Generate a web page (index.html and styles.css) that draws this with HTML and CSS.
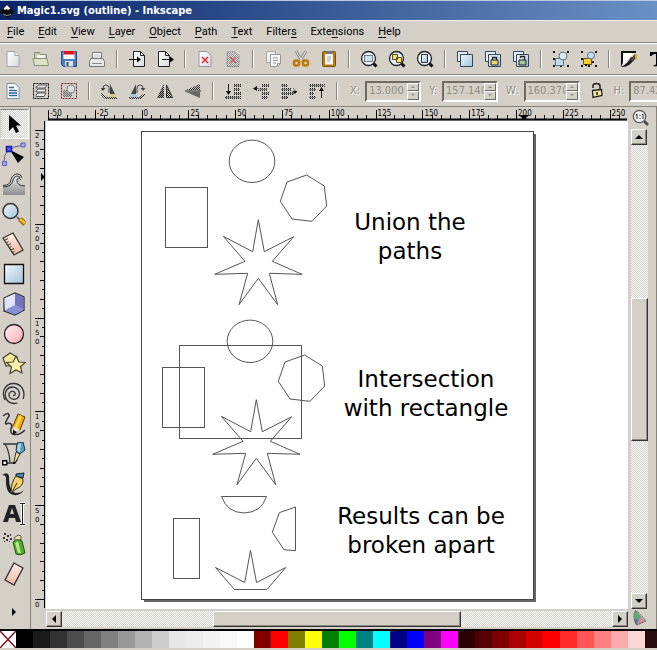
FILE: index.html
```html
<!DOCTYPE html>
<html lang="en">
<head>
<meta charset="utf-8">
<title>Magic1.svg (outline) - Inkscape</title>
<link rel="stylesheet" href="styles.css">
</head>
<body>
<svg class="defs" aria-hidden="true">
  <defs>
    <linearGradient id="gBlue" x1="0" y1="0" x2="1" y2="1"><stop offset="0" stop-color="#f4f9fd"/><stop offset="1" stop-color="#9fc0dc"/></linearGradient>
    <linearGradient id="gPink" x1="0" y1="0" x2="1" y2="1"><stop offset="0" stop-color="#fff0f2"/><stop offset="1" stop-color="#ffa8b2"/></linearGradient>
    <linearGradient id="gSkin" x1="0" y1="0" x2="0" y2="1"><stop offset="0" stop-color="#fdf3ee"/><stop offset="1" stop-color="#f3b49c"/></linearGradient>
    <linearGradient id="gPaper" x1="0" y1="0" x2="1" y2="1"><stop offset="0" stop-color="#fff"/><stop offset="1" stop-color="#dcdcdc"/></linearGradient>
    <linearGradient id="gWave" x1="0" y1="0" x2="0" y2="1"><stop offset="0" stop-color="#f2f2f0"/><stop offset="1" stop-color="#8c8c8c"/></linearGradient>
    <pattern id="mesh" width="2" height="2" patternUnits="userSpaceOnUse"><path d="M0 0h1v1H0zM1 1h1v1H1z" fill="#222"/></pattern>
    <symbol id="lens" viewBox="0 0 18 18"><path d="M13 13l3.500 3.500" stroke="#111" stroke-width="3"/><circle cx="8.500" cy="8.500" r="7" fill="#e8f2fa" stroke="#222" stroke-width="1.300"/></symbol>
    <symbol id="pair" viewBox="0 0 18 18"><path d="M1.500 1.500h10v10h-10z" fill="#e4eef6" stroke="#34485c"/><path d="M4.500 4.500h12v12h-12z" fill="url(#gBlue)" stroke="#34485c"/></symbol>
    <symbol id="nodes" viewBox="0 0 18 18"><path d="M1 1h2v2H1zM15 1h2v2h-2zM1 15h2v2H1zM15 15h2v2h-2zM8 15h2v2H8zM1 8h2v2H1z" fill="#111"/></symbol>
  </defs>
</svg>

<div class="window">
  <header class="titlebar">
    <svg class="logo" viewBox="0 0 14 16" aria-hidden="true"><path d="M7 1L0 8q-1 2 2 2.500L4 12l3 3 3-2 2-2.500q3-1 1.500-2.500z" fill="#0b0b0b"/><path d="M7 2L3.500 5.500 5 7l1.500-1 1.500 1 2.500-1.500z" fill="#f4f4f4"/><path d="M3 11.500q4 2 8 0" stroke="#888" fill="none"/></svg>
    <h1>Magic1.svg (outline) - Inkscape</h1>
  </header>

  <nav class="menubar">
    <button><u>F</u>ile</button><button><u>E</u>dit</button><button><u>V</u>iew</button><button><u>L</u>ayer</button><button><u>O</u>bject</button><button><u>P</u>ath</button><button><u>T</u>ext</button><button>Filter<u>s</u></button><button>Exte<u>n</u>sions</button><button><u>H</u>elp</button>
  </nav>

  <div class="toolbar" role="toolbar" aria-label="Commands">
    <button aria-label="New"><svg viewBox="0 0 18 18"><path d="M3 1.500h8l4 4v11H3z" fill="url(#gPaper)" stroke="#a2a4a0"/><path d="M11 1.500v4h4" fill="#eee" stroke="#a2a4a0"/></svg></button>
    <button aria-label="Open"><svg viewBox="0 0 18 18"><path d="M2.500 15.500v-13h5l1 2h6v11z" fill="#c2cba8" stroke="#8a9470"/><path d="M5 5h8v4H5z" fill="#f5f5ef"/><path d="M1 8.500h14l1.500 7h-14z" fill="#dce2c6" stroke="#8a9470"/></svg></button>
    <button aria-label="Save"><svg viewBox="0 0 18 18"><path d="M1.500 1.500h15v15h-13l-2-2z" fill="#4b7fbd" stroke="#234c80"/><path d="M3.500 1h11v8h-11z" fill="#fff"/><path d="M3.500 1h11v3.500h-11z" fill="#dd1420"/><path d="M5 11h8v5.500H5z" fill="#dfe4ea"/><path d="M6.500 12h2v4h-2z" fill="#2a4a74"/></svg></button>
    <button aria-label="Print"><svg viewBox="0 0 18 18"><path d="M4.500 9V2.500h9V9" fill="#fff" stroke="#777"/><path d="M6 5h6M6 7h6" stroke="#bbb"/><path d="M3 8.500h12l1.500 3v5h-15v-5z" fill="#e8e8e6" stroke="#777"/><path d="M4 13.500h10" stroke="#888"/></svg></button>
    <span class="sep"></span>
    <button aria-label="Import"><svg viewBox="0 0 18 18"><path d="M5.500 1.500h7l4 4v11h-11z" fill="url(#gPaper)" stroke="#222"/><path d="M12.500 1.500v4h4" fill="none" stroke="#222"/><path d="M1 9.500h9" stroke="#000"/><path d="M9 6.500l4 3-4 3z"/></svg></button>
    <button aria-label="Export"><svg viewBox="0 0 18 18"><path d="M2.500 1.500h7l4 4v11h-11z" fill="url(#gPaper)" stroke="#222"/><path d="M9.500 1.500v4h4" fill="none" stroke="#222"/><path d="M6 9.500h9" stroke="#000"/><path d="M14 6.500l4 3-4 3z"/></svg></button>
    <span class="sep"></span>
    <button aria-label="Undo"><svg viewBox="0 0 18 18"><path d="M3 1.500h8l4 4v11H3z" fill="url(#gPaper)" stroke="#999"/><path d="M6 7l6 6M12 7l-6 6" stroke="#e02a34" stroke-width="1.500"/></svg></button>
    <button aria-label="Redo" disabled><svg viewBox="0 0 18 18"><path d="M3 1.500h8l4 4v11H3z" fill="#e0dedb" stroke="#aaa"/><path d="M3 2h8l4 4v11H3z" fill="url(#mesh)" opacity=".4"/><path d="M6 7l6 6M12 7l-6 6" stroke="#c05a60" stroke-width="1.300"/></svg></button>
    <span class="sep"></span>
    <button aria-label="Copy"><svg viewBox="0 0 18 18"><path d="M2.500 1.500h9v11h-9z" fill="#eeeeec" stroke="#a8a8a4"/><path d="M6.500 4.500h10v9l-3 3h-7z" fill="#f7f7f5" stroke="#999"/><path d="M9 8h5M9 10.500h5M9 13h3M13.500 16v-2.500h3" fill="none" stroke="#999"/></svg></button>
    <button aria-label="Cut"><svg viewBox="0 0 18 18"><path d="M4 1l6 10M14 1L8 11" stroke="#8b8f8b" stroke-width="3"/><path d="M4 1l6 10M14 1L8 11" stroke="#e8e8e4"/><rect x="2" y="10.500" width="5" height="5" rx="2" fill="none" stroke="#c07a08" stroke-width="2.500"/><rect x="11" y="10.500" width="5" height="5" rx="2" fill="none" stroke="#c07a08" stroke-width="2.500"/></svg></button>
    <button aria-label="Paste"><svg viewBox="0 0 18 18"><rect x="2.500" y="1.500" width="13" height="15" rx="1" fill="#b97a1a" stroke="#7c4c08"/><path d="M5 4h8v10.500H5z" fill="#f6f6f4"/><path d="M6 1h6v3H6z" fill="#777"/><path d="M7 7h4M7 9h4M7 11h3" stroke="#aaa"/></svg></button>
    <span class="sep"></span>
    <button aria-label="Zoom selection"><svg viewBox="0 0 18 18"><use href="#lens"/><path d="M4.500 5.500h8v6h-8z" fill="#cfe0ee" stroke="#111" stroke-dasharray="1 1"/></svg></button>
    <button aria-label="Zoom drawing"><svg viewBox="0 0 18 18"><use href="#lens"/><path d="M4.500 4.500h5v5h-5zM8.500 7.500h5v5h-5z" fill="#f5e27c" stroke="#5a4a10"/></svg></button>
    <button aria-label="Zoom page"><svg viewBox="0 0 18 18"><use href="#lens"/><path d="M5.500 4.500h6v8h-6z" fill="url(#gBlue)" stroke="#333"/></svg></button>
    <span class="sep"></span>
    <button aria-label="Duplicate"><svg viewBox="0 0 18 18"><use href="#pair"/></svg></button>
    <button aria-label="Clone"><svg viewBox="0 0 18 18"><use href="#pair"/><path d="M8.500 10V7.500h4V10" fill="none" stroke="#222" stroke-width="1.300"/><path d="M7 10h7v5H7z" fill="#f1d66a" stroke="#222"/></svg></button>
    <button aria-label="Unlink clone"><svg viewBox="0 0 18 18"><use href="#pair"/><path d="M8.500 8V6.500h4V10" fill="none" stroke="#222" stroke-width="1.300"/><path d="M7 10h7v5H7z" fill="#a9c79a" stroke="#222"/></svg></button>
    <span class="sep"></span>
    <button aria-label="Group"><svg viewBox="0 0 18 18"><use href="#nodes"/><path d="M3.500 8.500h8v7h-8z" fill="#c4d9ea" stroke="#5b7387"/><circle cx="11" cy="6" r="4" fill="#dbe8f2" stroke="#5b7387"/></svg></button>
    <button aria-label="Ungroup"><svg viewBox="0 0 18 18"><use href="#nodes"/><path d="M3.500 8.500h8v6h-8z" fill="#f4cc30" stroke="#6b5410"/><circle cx="11" cy="5.500" r="3.500" fill="#c9dcf0" stroke="#5b7387"/><path d="M5 14h2v2H5zM12 11h2v2h-2z"/></svg></button>
    <span class="sep"></span>
    <button aria-label="Fill and stroke"><svg viewBox="0 0 18 18"><path d="M1 1.500h15L2 16z" fill="#fff"/><path d="M1 1h15v2H3v10l-2 4z" fill="#111"/><path d="M1 17q8 1 13-8l-3-2q-3 7-10 10z" fill="#111"/><path d="M10 10l5-6 2 2-4 6z" fill="#444"/><path d="M15 4l2 1v4l-2 1z" fill="#e0a91a"/></svg></button>
    <button aria-label="Text and font"><svg viewBox="0 0 18 18"><path d="M2 2h15v4h-1.500q-.5-2-4-2v10.500l2.500 1v.8H5.500v-.8l2.500-1V4q-4 0-4.500 2H2z"/></svg></button>
  </div>

  <div class="toolbar" role="toolbar" aria-label="Selector controls">
    <button aria-label="Select all"><svg viewBox="0 0 18 18"><path d="M3 1.500h8l4 4v11H3z" fill="#fff" stroke="#7d8da0"/><path d="M5 5.500h5M5 8.500h8M5 11h8M5 13.500h8" stroke="#2f67a8" stroke-width="1.500"/></svg></button>
    <button aria-label="Select in all layers"><svg viewBox="0 0 18 18"><path d="M1.500 1.500h15v15h-15z" fill="none" stroke="#000" stroke-dasharray="2 1"/><path d="M4 5l3-2h8l-2 3H4zM4 9l2-2h8l-1 3H4zM4 13l2-2h8l-2 3.500H4z" fill="#f0f0ee" stroke="#555"/></svg></button>
    <button aria-label="Deselect"><svg viewBox="0 0 18 18"><path d="M1.500 1.500h15v15h-15z" fill="none" stroke="#7a2430" stroke-dasharray="2 1"/><path d="M3 8h9v7H3z" fill="#bbb"/><path d="M3 8h9v7H3z" fill="url(#mesh)" opacity=".5"/><circle cx="11" cy="7" r="4" fill="#dededc" stroke="#888"/></svg></button>
    <span class="sep"></span>
    <button aria-label="Rotate left"><svg viewBox="0 0 18 18"><path d="M3 8V6q0-3 3-3t3 3v5" fill="none" stroke="#444"/><path d="M0.500 6h5L3 9zM10 2l5 10h-5z" fill="#444"/><path d="M1 11l6 4h10v2H5l-4-4z" fill="url(#mesh)"/><path d="M9 12h7v3H9z" fill="#d8c998"/></svg></button>
    <button aria-label="Rotate right"><svg viewBox="0 0 18 18"><path d="M15 8V6q0-3-3-3T9 6v5" fill="none" stroke="#444"/><path d="M12.500 6h5L15 9zM8 2L3 12h5z" fill="#444"/><path d="M17 11l-6 4H1v2h12l4-4z" fill="url(#mesh)"/><path d="M2 12h7v3H2z" fill="#aac3dc"/></svg></button>
    <button aria-label="Flip horizontal"><svg viewBox="0 0 18 18"><path d="M7.500 2v14H1z" fill="#999"/><path d="M8 2v14H1zM10 2v14h7z" fill="url(#mesh)"/><path d="M10.500 3v12.500h6z" fill="none" stroke="#333"/></svg></button>
    <button aria-label="Flip vertical"><svg viewBox="0 0 18 18"><path d="M16 2v6H2z" fill="url(#mesh)"/><path d="M16 16v-6H2z" fill="#666"/><path d="M1 9h16" stroke="#222"/></svg></button>
    <span class="sep"></span>
    <button aria-label="Lower to bottom"><svg viewBox="0 0 18 18"><path d="M10 2h7v3h-7zM10 6h5v3h-5zM10 10h7v3h-7zM1 14h16v3H1z" fill="url(#mesh)"/><path d="M10 3.500h7M10 7.500h6M10 11.500h7M2 15.500h14" stroke="#777"/><path d="M4.500 2v8" stroke="#222"/><path d="M2 9h5l-2.500 4z"/></svg></button>
    <button aria-label="Lower"><svg viewBox="0 0 18 18"><path d="M10 2h7v3h-7zM6 6h9v3H6zM10 10h7v3h-7zM10 14h6v3h-6z" fill="url(#mesh)"/><path d="M10 3.500h7M7 7.500h8M10 11.500h7M10 15.500h6M3 6.500h4" stroke="#777"/><path d="M1 6.500L5 4v5z"/></svg></button>
    <button aria-label="Raise"><svg viewBox="0 0 18 18"><path d="M1 2h7v3H1zM1 6h10v3H1zM1 10h13v3H1zM1 14h7v3H1z" fill="url(#mesh)"/><path d="M1 3.500h7M1 7.500h10M1 11.500h12M1 15.500h6M13 6l2 2v2" fill="none" stroke="#777"/><path d="M12.500 9h5L15 12z"/></svg></button>
    <button aria-label="Raise to top"><svg viewBox="0 0 18 18"><path d="M1 2h16v3H1zM1 6h7v3H1zM1 10h5v3H1zM1 14h7v3H1z" fill="url(#mesh)"/><path d="M1 3.500h15M1 7.500h7M1 11.500h5M1 15.500h7" stroke="#777"/><path d="M13.500 16V8" stroke="#222"/><path d="M11 9h5l-2.500-4z"/></svg></button>
    <span class="sep"></span>
    <div class="fields">
      <div class="field"><label for="fx">X:</label><span class="spin"><input id="fx" type="text" value="13.000" disabled><span class="steps"><button class="up" aria-label="Increase X" disabled></button><button class="down" aria-label="Decrease X" disabled></button></span></span></div>
      <div class="field"><label for="fy">Y:</label><span class="spin"><input id="fy" type="text" value="157.140" disabled><span class="steps"><button class="up" aria-label="Increase Y" disabled></button><button class="down" aria-label="Decrease Y" disabled></button></span></span></div>
      <div class="field"><label for="fw">W:</label><span class="spin"><input id="fw" type="text" value="160.370" disabled><span class="steps"><button class="up" aria-label="Increase width" disabled></button><button class="down" aria-label="Decrease width" disabled></button></span></span></div>
      <button class="lock" aria-label="Lock ratio"><svg viewBox="0 0 18 18"><path d="M5 6V4q0-2.500 3.500-2.500T12 4v5" fill="none" stroke="#222" stroke-width="1.500"/><path d="M4.500 8.500l9-1 .5 6-9 2z" fill="#f3e8a4" stroke="#222" stroke-width="1.300"/><path d="M9 10v3" stroke="#222" stroke-width="1.500"/></svg></button>
      <div class="field"><label for="fh">H:</label><span class="spin"><input id="fh" type="text" value="87.429" disabled><span class="steps"><button class="up" aria-label="Increase height" disabled></button><button class="down" aria-label="Decrease height" disabled></button></span></span></div>
    </div>
  </div>

  <main class="main">
    <aside class="toolbox" role="toolbar" aria-label="Tools">
      <button class="on" aria-label="Selector"><svg viewBox="0 0 24 24"><path d="M7 3v16l4-4 3 6 3-1.500-3-6h5z"/></svg></button>
      <button aria-label="Node editor"><svg viewBox="0 0 24 24"><path d="M2 20Q1 5 22 3" fill="none" stroke="#667"/><path d="M8 8l14 7-6 6z"/><path d="M4.500 4.500h5v5h-5z" fill="#5a5ae0" stroke="#1818a8" stroke-width="1.500"/><path d="M19 1h4v4h-4zM.5 19.500h4v4h-4z" fill="#a8a8ee" stroke="#5c5cc8"/></svg></button>
      <button aria-label="Tweak"><svg viewBox="0 0 24 24"><path d="M1 13q8 0 9-6 2-5 7-4 3 2 2 4-2-3-4 0-1 5 8 6v10H1z" fill="url(#gWave)"/><path d="M1 13.500q7 0 8-6 2-6 7-5.500 4 1 4 4M1 15q9 0 10-7 1-4 4-4 3 0 3 2M19 8q-3-4-4 0 0 6 8 6" fill="none" stroke="#333"/></svg></button>
      <button aria-label="Zoom"><svg viewBox="0 0 24 24"><path d="M15 15l3 3" stroke="#666" stroke-width="2"/><path d="M18 17l5 5" stroke="#8a5c00" stroke-width="5"/><path d="M18 17l5 4.500" stroke="#f6ba28" stroke-width="3"/><circle cx="8.500" cy="9" r="7.500" fill="url(#gBlue)" stroke="#333" stroke-width="1.500"/></svg></button>
      <button aria-label="Measure"><svg viewBox="0 0 24 24"><path d="M1 6L11 1l10 17-9 5z" fill="url(#gSkin)" stroke="#332" stroke-width="1.300"/><path d="M3 8l3-1.500M4.500 10.500l2-1M6 13l3-1.500M7.500 15.500l2-1M9 18l3-1.500M10.500 20.500l2-1" stroke="#332"/></svg></button>
      <button aria-label="Rectangle"><svg viewBox="0 0 24 24"><path d="M2.500 2.500h19v19h-19z" fill="url(#gBlue)" stroke="#111" stroke-width="1.300"/></svg></button>
      <button aria-label="3D box"><svg viewBox="0 0 24 24"><path d="M2 6l11-5 9 4v13l-9 5-11-4z" fill="#b3b6ea" stroke="#333" stroke-width="1.300"/><path d="M2.500 6.200l10.500-4.500V13L3 18z" fill="#e2e4fa"/><path d="M13 1.700l8.500 4v12L13 13z" fill="#7175be"/><path d="M3 18.500l10-5.500 8.500 5-8.500 4.500z" fill="#8a8fd6"/></svg></button>
      <button aria-label="Ellipse"><svg viewBox="0 0 24 24"><circle cx="12" cy="12" r="9.500" fill="url(#gPink)" stroke="#222" stroke-width="1.300"/></svg></button>
      <button aria-label="Star"><svg viewBox="0 0 24 24"><path d="M1 6l7-5 7 4-1 8-10 1z" fill="#f7eb9a" stroke="#443" stroke-width="1.200"/><path d="M14 4l3 6 6.500.5-5 4 1.500 6.500-6-3-6 3.500 1.500-6.500-5-4.500 6.500-.5z" fill="#fbf2a8" stroke="#443" stroke-width="1.200"/></svg></button>
      <button aria-label="Spiral"><svg viewBox="0 0 24 24"><path d="M11 13.500c2.500.5 3-3 .5-4C8 8.500 6 12 7.500 15c2 3.500 8 3 9.500-1 1.500-5-2-9-6.500-9C5 5 2.500 10 3.500 15c1.500 5.500 7 7.500 12 6M3 18C-1 10 3 1.500 11.500 1.500c8 0 12.500 8 9.500 15.500" fill="none" stroke="#333" stroke-width="1.300"/></svg></button>
      <button aria-label="Pencil"><svg viewBox="0 0 24 24"><path d="M1 4q6-5 6 0-5 8-3 8 5-2 6 2-3 7 1 8 6 2 12-4" fill="none" stroke="#333" stroke-width="1.500"/><path d="M11 14l5-12 7 3-5 13-6 3z" fill="#f6a821" stroke="#553a08"/><path d="M13 14l5-11 2 1-5 12z" fill="#ffe24a"/><path d="M11 14l7 4-6 4z" fill="#fbe9cf"/><path d="M11 18v5l4-3z"/></svg></button>
      <button aria-label="Pen"><svg viewBox="0 0 24 24"><path d="M1 2h14M3 2q4 6 5 18M3 21h10q4-4 1-9" fill="none" stroke="#333" stroke-width="1.300"/><path d="M15 1l6-1 2 8-5 4-4-3z" fill="#5d9cc0" stroke="#234"/><path d="M16 2l3-1-1 9-3-1z" fill="#a9d4ea"/><path d="M14 10l4 2-5 9-1-1z" fill="#eee3a0" stroke="#333"/><path d="M.7 18.700h4v4h-4z" fill="#fff" stroke="#000" stroke-width="1.400"/><path d="M11 20h2v2h-2z"/></svg></button>
      <button aria-label="Calligraphy"><svg viewBox="0 0 24 24"><path d="M0 3q6-4 7 1 0 16 7 17 5 0 8-3-4 6-10 5Q3 22 4 5 3 3 0 3z" fill="#222"/><path d="M14 2l8-1-1 5-7-2z" fill="#4d88ab" stroke="#123"/><path d="M14 4l7 3q1 7-7 10l-5 4q0-11 5-17z" fill="#f4cf6c" stroke="#332"/><path d="M10 20l5-9" stroke="#332"/></svg></button>
      <button aria-label="Text"><svg viewBox="0 0 24 24"><path d="M1 20L7 3h6l6 17h-5l-1-4H7l-1 4zM8 12h4l-2-6z" fill="#222" fill-rule="evenodd"/><path d="M18 1.500h5M18 22.500h5M20.500 2v20" stroke="#fff" stroke-width="3"/><path d="M18 1.500h5M18 22.500h5M20.500 2v20" stroke="#222"/></svg></button>
      <button aria-label="Spray"><svg viewBox="0 0 24 24"><path d="M2 1h2v2H2zM5 3h2v2H5zM1 5h2v2H1zM4 7h2v2H4zM8 2h1v2H8zM8 6h2v2H8zM2 9h1v1H2zM7 9h1v1H7z" fill="#333"/><path d="M12 6l4-3 3 1v4l-5 1z" fill="#f3dcb2" stroke="#554"/><path d="M11 10q4-4 9-1l3 12q-4 3-9 1z" fill="#55a82a" stroke="#27520f"/><path d="M13 11l3-2 3 12h-3z" fill="#b4e68a"/></svg></button>
      <button aria-label="Eraser"><svg viewBox="0 0 24 24"><path d="M12 1l9 5-9 17-9-5z" fill="url(#gSkin)" stroke="#333" stroke-width="1.300"/></svg></button>
      <button class="more" aria-label="More tools"><svg viewBox="0 0 24 24"><path d="M10 8v8l4-4z"/></svg></button>
    </aside>

    <section class="workspace">
      <span class="corner"></span>
      <svg class="hruler" id="hruler" aria-hidden="true"></svg>
      <button class="ratio" aria-label="Zoom 1:1"><svg viewBox="0 0 18 18"><path d="M12 12l4 4" stroke="#444" stroke-width="2.500"/><circle cx="7.500" cy="7.500" r="6.200" fill="#eee" stroke="#555" stroke-width="1.300"/><path d="M4 6l1-1v5M10 6l1-1v5M8 6v1M8 9v1" fill="none" stroke="#333"/></svg></button>
      <svg class="vruler" id="vruler" aria-hidden="true"></svg>
      <div class="canvas">
        <svg class="art" role="img" aria-label="Drawing">
          <g transform="translate(95 10)">
            <path d="M393.500 3v466.500H3" class="shade"/>
            <rect class="page" x=".5" y=".5" width="392" height="468"/>
            <g class="outline">
              <rect x="24.500" y="56.500" width="42" height="60"/>
              <g id="parts">
                <ellipse cx="111" cy="30.300" rx="22.800" ry="21.200"/>
                <path d="M165.700 44l17.600 11 2.400 20-14.700 15.300-20-2.300-11.700-17.700L146 51z"/>
                <path d="M117.300 88.700l6 32 29.400-15-21.400 24.600 29.700 13-32.700-1 8.400 31.400-19.400-26.400L98 173.700l8.700-31.400-33 1 30.300-13-21.700-25 29.400 15.400z"/>
              </g>
              <rect x="38.500" y="214.500" width="122" height="93"/>
              <rect x="21.500" y="236.500" width="42" height="60"/>
              <use href="#parts" x="-2" y="180"/>
              <path d="M80.500 365.500h45q-5 16-22.500 16.500-17-.5-22.500-16.500z"/>
              <rect x="32.500" y="387.500" width="26" height="60"/>
              <path d="M154.500 376v43.700l-11.500-1-11.700-17.400 7-19.600z"/>
              <path d="M74.500 436.500l29.200 15 5.800-32.200 6 32.200 29.200-15-18.700 22H93.500z"/>
            </g>
            <g class="words">
              <text x="269" y="99">Union the</text><text x="269" y="128">paths</text>
              <text x="285" y="256">Intersection</text><text x="285" y="285">with rectangle</text>
              <text x="280" y="393">Results can be</text><text x="280" y="422">broken apart</text>
            </g>
          </g>
        </svg>
      </div>
      <div class="vscroll"><button class="up" aria-label="Scroll up"></button><span class="track"><span class="thumb"></span></span><button class="down" aria-label="Scroll down"></button></div>
      <div class="hscroll"><button class="left" aria-label="Scroll left"></button><span class="track"><span class="thumb"></span></span><button class="right" aria-label="Scroll right"></button></div>
      <button class="cms" aria-label="Color management"><svg viewBox="0 0 18 18"><path d="M4 2q2-1 9 10l-8 4q-3-6-1-14z" fill="#5aa878"/><path d="M9 8l6 4-9 4z" fill="#d88a98"/><path d="M3 11l5-1-3 6z" fill="#5a6cc0"/><path d="M4 2q2-1 11 10l-9 4q-5-8-2-14z" fill="none" stroke="#555" stroke-dasharray="2 1"/></svg></button>
    </section>
  </main>

  <footer class="palette" id="palette"><button class="none" aria-label="No color"><svg viewBox="0 0 16 17" preserveAspectRatio="none"><path d="M0 0l16 17M16 0L0 17" stroke="#7a1020" stroke-width="1.500"/></svg></button></footer>
</div>
<script src="script.js"></script>
</body>
</html>
```
FILE: styles.css
```css
* { box-sizing: border-box; }
body { margin: 0; background: #d4d0c8; color: #000; font: 11px/14px "DejaVu Sans Condensed", "DejaVu Sans", sans-serif; }
button { margin: 0; padding: 0; border: 0; background: none; color: inherit; font: inherit; flex: none; }
svg { display: block; }
.defs { position: absolute; width: 0; height: 0; }
.window { display: flex; flex-direction: column; min-height: 100vh; overflow: hidden; }

.titlebar { display: flex; align-items: center; gap: 3px; height: 20px; border-top: 1px solid #b8cde0; background: linear-gradient(90deg, #0a246a, #6a90c4); color: #fff; }
.titlebar h1 { margin: 0; font: bold 11px/16px "DejaVu Sans Condensed", sans-serif; }
.logo { width: 14px; height: 16px; }

.menubar { display: flex; gap: 14px; align-items: center; height: 23px; padding-left: 7px; border-top: 1px solid #f2f0ec; border-bottom: 1px solid #858279; font: 11px/16px Roboto, sans-serif; }
.menubar u { text-underline-offset: 2px; }

.toolbar { display: flex; align-items: center; gap: 2px; height: 32px; overflow: hidden; border-top: 1px solid #fff; border-bottom: 1px solid #858279; }
.toolbar > button { width: 26px; height: 26px; display: grid; place-items: center; }
.toolbar svg { width: 18px; height: 18px; }
.sep { flex: none; width: 10px; height: 18px; background: linear-gradient(90deg, #858279 50%, #fff 50%) center / 2px 100% no-repeat; }
.fields { display: flex; flex: none; align-items: center; gap: 8px; padding-left: 6px; color: #8f8c84; }
.field { display: flex; align-items: center; gap: 5px; text-shadow: 1px 1px #fff; }
.spin { display: flex; width: 56px; height: 21px; border: 2px solid; border-color: #6e6b64 #fff #fff #6e6b64; }
.spin input { flex: 1; min-width: 0; padding: 0 0 0 2px; border: 0; background: #d4d0c8; color: #8f8c84; font: inherit; }
.steps { display: flex; flex-direction: column; width: 12px; }
.steps button { flex: 1; display: grid; place-items: center; border: 1px solid; border-color: #fff #6e6b64 #6e6b64 #fff; }
.steps .up::before, .steps .down::before { content: ""; border: 2px solid transparent; }
.steps .up::before { border-top: 0; border-bottom-color: #8f8c84; }
.steps .down::before { border-bottom: 0; border-top-color: #8f8c84; }
.lock svg { width: 18px; height: 18px; }

.main { display: flex; flex: 1; }
.toolbox { display: flex; flex-direction: column; flex: none; width: 31px; padding-top: 2px; border-right: 1px solid #858279; }
.toolbox button { display: grid; place-items: center; width: 29px; height: 30px; padding-right: 2px; }
.toolbox svg { width: 24px; height: 24px; }
.toolbox .on { border: 1px solid; border-color: #858279 #fff #fff #d4d0c8; background: repeating-conic-gradient(#fff 0 25%, #d4d0c8 0 50%) 0 0 / 2px 2px; }
.toolbox .more { margin: auto 0 2px; }

.workspace { display: grid; flex: 1; min-width: 0; grid-template: 14px 1fr 20px / 15px 1fr 28px; border-right: 1px solid #858279; }
.hruler, .vruler { width: 100%; height: 100%; overflow: hidden; font: 8px "DejaVu Sans Condensed", sans-serif; }
.vruler { font: 7px "DejaVu Sans", sans-serif; }
.canvas { position: relative; min-width: 0; min-height: 0; background: #fff; }
.art { position: absolute; inset: 0; width: 100%; height: 100%; }
.page { fill: #fff; stroke: #444; }
.shade { fill: none; stroke: #666; stroke-width: 3; }
.outline { fill: none; stroke: #555; stroke-width: 1; }
.words { font: 23px "DejaVu Sans", sans-serif; text-anchor: middle; }
.ratio, .cms { display: flex; justify-content: center; align-items: start; padding: 2px 2px 0 0; z-index: 1; }
.cms { padding-top: 0; padding-right: 4px; }
.ratio { height: 20px; }
.ratio svg, .cms svg { width: 18px; height: 18px; }

.vscroll, .hscroll { display: flex; }
.vscroll { flex-direction: column; margin: 8px 8px 0 3px; }
.hscroll { grid-column: 1 / 3; margin: 2px 0 2px 15px; }
.vscroll button, .hscroll button, .thumb { border: 1px solid; border-color: #fff #333 #333 #fff; background: #d4d0c8; box-shadow: inset -1px -1px #8f8c84; }
.vscroll button, .hscroll button { display: grid; place-items: center; width: 16px; height: 16px; }
.track { display: flex; flex: 1; background: repeating-conic-gradient(#fff 0 25%, #d4d0c8 0 50%) 0 0 / 2px 2px; }
.vscroll .track { flex-direction: column; }
.vscroll .thumb { width: 100%; height: 32%; margin-top: 153px; }
.hscroll .thumb { width: 45%; margin: 0 auto; }
.vscroll button::before, .hscroll button::before { content: ""; border: 4px solid transparent; }
.vscroll .up::before { border-top: 0; border-bottom-color: #000; }
.vscroll .down::before { border-bottom: 0; border-top-color: #000; }
.hscroll .left::before { border-left: 0; border-right-color: #000; }
.hscroll .right::before { border-right: 0; border-left-color: #000; }

.palette { display: flex; height: 21px; padding-bottom: 2px; overflow: hidden; border-top: 2px solid #000; }
.palette button { width: 17px; }
.palette .none { width: 16px; background: #fff; }
.palette .none svg { width: 16px; height: 17px; }
```
FILE: script.js
```js
const NS = "http://www.w3.org/2000/svg";

function add(parent, name, attrs, text) {
  const el = document.createElementNS(NS, name);
  for (const key in attrs) el.setAttribute(key, attrs[key]);
  if (text) el.textContent = text;
  parent.appendChild(el);
}

// Horizontal ruler: a label every 25 units, a tick every 5.
const h = document.getElementById("hruler");
const hStep = 46.8;
add(h, "path", { d: "M2 12.5H581", stroke: "#000", "stroke-width": 2 });
for (let i = 0; i <= 12; i++) {
  const x = 2 + i * hStep;
  add(h, "path", { d: `M${Math.round(x) + 0.5} 3V12`, stroke: "#000" });
  add(h, "text", { x: x + 2, y: 9 }, String(-50 + i * 25));
  for (let k = 1; k < 5 && x + k * hStep / 5 < 580; k++) {
    add(h, "path", { d: `M${Math.round(x + k * hStep / 5) + 0.5} 8V12`, stroke: "#000" });
  }
}
add(h, "path", { d: "M473 8h10l-5 5z" });

// Vertical ruler: a label every 50 units, counted upwards, digits stacked.
const v = document.getElementById("vruler");
const vStep = 93.8;
add(v, "path", { d: "M13.5 0V487", stroke: "#000" });
for (let i = 0; i <= 5; i++) {
  const y = 9 + i * vStep;
  add(v, "path", { d: `M4 ${Math.round(y) + 0.5}H13`, stroke: "#000" });
  [...String(250 - i * 50)].forEach((d, n) => add(v, "text", { x: 4, y: Math.round(y) + 8 + n * 9 }, d));
  for (let k = 1; k < 10 && i < 5; k++) {
    add(v, "path", { d: `M${k % 2 ? 11 : 9} ${Math.round(y + k * vStep / 10) + 0.5}H13`, stroke: "#000" });
  }
}
add(v, "path", { d: "M10 52v8l4-4z" });

const colors = ["#000000", "#1a1a1a", "#333333", "#4d4d4d", "#666666", "#808080", "#999999", "#b3b3b3", "#cccccc", "#e6e6e6", "#ececec", "#f2f2f2", "#f9f9f9", "#ffffff", "#800000", "#ff0000", "#808000", "#ffff00", "#008000", "#00ff00", "#008080", "#00ffff", "#000080", "#0000ff", "#800080", "#ff00ff", "#2b0000", "#550000", "#800000", "#aa0000", "#d40000", "#ff0000", "#ff2a2a", "#ff5555", "#ff8080", "#ffaaaa", "#ffd5d5", "#280b0b"];
const palette = document.getElementById("palette");
for (const color of colors) {
  const swatch = document.createElement("button");
  swatch.style.background = color;
  swatch.setAttribute("aria-label", color);
  palette.appendChild(swatch);
}
```
